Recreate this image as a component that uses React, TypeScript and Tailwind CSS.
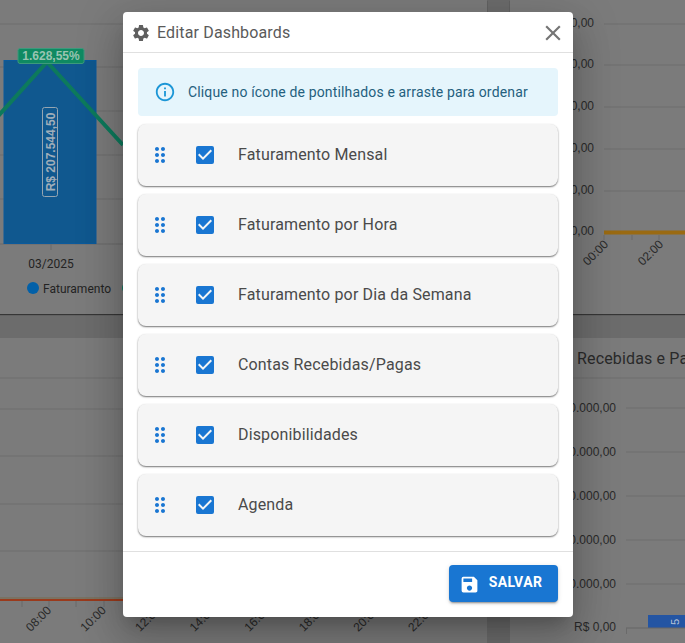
import { MdCheckBox, MdClose, MdDragIndicator, MdInfoOutline, MdSave, MdSettings } from 'react-icons/md';

const dashboards = ['Faturamento Mensal', 'Faturamento por Hora', 'Faturamento por Dia da Semana', 'Contas Recebidas/Pagas', 'Disponibilidades', 'Agenda'];

function MonthlyChart() {
    return (
        <svg width="487" height="314" className="block" fontFamily="Roboto, sans-serif">
            {[24, 67, 111, 155, 199].map((y) => (
                <line key={y} x1="0" x2="487" y1={y} y2={y} stroke="#6f6f6f" />
            ))}
            <line x1="0" x2="487" y1="244" y2="244" stroke="#6a6a6a" />
            <line x1="51" x2="51" y1="244" y2="250" stroke="#6a6a6a" />
            <rect x="4" y="60.5" width="92" height="183" fill="#10588f" stroke="#0b5a9c" />
            <polyline points="-10,125 47,62 123,145" fill="none" stroke="#0d7a5c" strokeWidth="4" />
            <rect x="18" y="48.5" width="66" height="15" rx="2" fill="#0f8a62" stroke="#3d9a7c" />
            <text x="51" y="60" textAnchor="middle" fontFamily="Arial, 'Liberation Sans', sans-serif" fontWeight="700" fontSize="12" fill="#98c4b1">
                1.628,55%
            </text>
            <rect x="42.5" y="107.5" width="15" height="89" rx="2" fill="#10588f" stroke="#95a5b1" />
            <text
                transform="translate(54.5 152) rotate(-90)"
                textAnchor="middle"
                fontFamily="Arial, 'Liberation Sans', sans-serif"
                fontWeight="700"
                fontSize="12"
                fill="#a0aeb9"
            >
                R$ 207.544,50
            </text>
            <text x="51" y="268" textAnchor="middle" fontSize="12" fill="#232323">
                03/2025
            </text>
            <circle cx="33" cy="288" r="6" fill="#0260a8" />
            <text x="43" y="293" fontSize="12" fill="#232323">
                Faturamento
            </text>
            <circle cx="128" cy="288" r="6" fill="#0d7a5c" />
        </svg>
    );
}

function HourlyChart() {
    return (
        <svg width="175" height="314" className="block" fontFamily="Arial, 'Liberation Sans', sans-serif" fontSize="12" fill="#2a2a2a">
            {[24, 65, 107, 149, 191].map((y) => (
                <g key={y}>
                    <line x1="94" x2="175" y1={y} y2={y} stroke="#6f6f6f" />
                    <text x="84" y={y + 3} textAnchor="end">
                        0,00
                    </text>
                </g>
            ))}
            <text x="84" y="235" textAnchor="end">
                0,00
            </text>
            <line x1="94" x2="175" y1="232.5" y2="232.5" stroke="#9a6a12" strokeWidth="4" />
            <line x1="94" x2="94" y1="235" y2="240" stroke="#6a6a6a" />
            <line x1="122" x2="122" y1="235" y2="240" stroke="#6a6a6a" />
            <line x1="149" x2="149" y1="235" y2="240" stroke="#6a6a6a" />
            <text transform="translate(99 245) rotate(-45)" textAnchor="end">
                00:00
            </text>
            <text transform="translate(154 245) rotate(-45)" textAnchor="end">
                02:00
            </text>
        </svg>
    );
}

function AgendaChart() {
    const hours = ['08:00', '10:00', '12:00', '14:00', '16:00', '18:00', '20:00', '22:00'];
    return (
        <svg width="487" height="305" className="block" fontFamily="Arial, 'Liberation Sans', sans-serif" fontSize="12" fill="#2a2a2a">
            {[40, 71, 118, 166, 213].map((y) => (
                <line key={y} x1="0" x2="487" y1={y} y2={y} stroke="#6f6f6f" />
            ))}
            <line x1="0" x2="487" y1="260" y2="260" stroke="#7a6a4a" />
            <line x1="0" x2="487" y1="262" y2="262" stroke="#9a3a1c" strokeWidth="2" />
            {[22, 49, 76, 104].map((x) => (
                <line key={x} x1={x} x2={x} y1="263" y2="269" stroke="#6a6a6a" />
            ))}
            {hours.map((h, i) => (
                <text key={h} transform={`translate(${52 + i * 54.6} 273) rotate(-45)`} textAnchor="end">
                    {h}
                </text>
            ))}
        </svg>
    );
}

function AccountsChart() {
    return (
        <svg width="175" height="305" className="block" fontFamily="Arial, 'Liberation Sans', sans-serif" fontSize="12" fill="#2a2a2a">
            <text x="67" y="26" fontFamily="Roboto, sans-serif" fontSize="16" letterSpacing="0.15">
                Recebidas e Pa
            </text>
            <line x1="0" x2="175" y1="40" y2="40" stroke="#6f6f6f" />
            {[70, 114, 158, 202, 246].map((y) => (
                <g key={y}>
                    <line x1="116" x2="175" y1={y} y2={y} stroke="#6f6f6f" />
                    <text x="106" y={y + 4} textAnchor="end">
                        0.000,00
                    </text>
                </g>
            ))}
            <rect x="138" y="277" width="37" height="13" fill="#2455a3" />
            <text transform="translate(169 284) rotate(-90)" textAnchor="middle" fontSize="11" fill="#b7c3d6">
                5
            </text>
            <line x1="116" x2="175" y1="290" y2="290" stroke="#666666" />
            <line x1="116.5" x2="116.5" y1="290" y2="296" stroke="#6a6a6a" />
            <text x="106" y="293" textAnchor="end">
                R$ 0,00
            </text>
        </svg>
    );
}

function DashboardRow({ label }: { label: string }) {
    return (
        <div className="flex h-[62px] items-center rounded-lg bg-[#f5f5f5] pl-[10px] shadow-[0_1px_2px_0_rgba(0,0,0,0.45),0_1px_1px_0_rgba(0,0,0,0.14)]">
            <MdDragIndicator size={24} className="text-[#1976d2]" />
            <MdCheckBox size={24} className="ml-[21px] text-[#1976d2]" />
            <span className="ml-[21px] text-base tracking-[0.15px] text-[#4a4a4a]">{label}</span>
        </div>
    );
}

export default function App() {
    return (
        <div className="relative h-[643px] w-[685px] overflow-hidden bg-[#6c6c6c] font-['Roboto',sans-serif]">
            <div className="grid grid-cols-[487px_175px] grid-rows-[314px_305px] gap-x-[23px] gap-y-6">
                <div className="bg-[#7b7b7b] shadow-[0_1px_1px_rgba(0,0,0,0.5)]">
                    <MonthlyChart />
                </div>
                <div className="bg-[#7b7b7b] shadow-[0_1px_1px_rgba(0,0,0,0.5)]">
                    <HourlyChart />
                </div>
                <div className="bg-[#7b7b7b]">
                    <AgendaChart />
                </div>
                <div className="bg-[#7b7b7b]">
                    <AccountsChart />
                </div>
            </div>
            <div className="absolute inset-0 pl-[123px] pt-3">
                <div className="flex h-[605px] w-[450px] flex-col rounded bg-white shadow-[0_11px_15px_-7px_rgba(0,0,0,0.2),0_24px_38px_3px_rgba(0,0,0,0.14),0_9px_46px_8px_rgba(0,0,0,0.12)]">
                    <div className="flex h-[41px] items-center border-b border-[#e0e0e0] pl-2 pr-[7px] pt-[2px]">
                        <MdSettings size={20} className="text-[#5f5f5f]" />
                        <span className="ml-[6px] text-base tracking-[0.15px] text-[#5a5a5a]">Editar Dashboards</span>
                        <MdClose size={26} className="ml-auto text-[#757575]" />
                    </div>
                    <div className="flex flex-1 flex-col gap-2 px-[15px] pt-[15px]">
                        <div className="flex h-12 items-center rounded bg-[#e5f5fc] pl-4">
                            <MdInfoOutline size={22} className="text-[#1c96d6]" />
                            <span className="ml-3 text-sm tracking-[0.15px] text-[#24607e]">Clique no ícone de pontilhados e arraste para ordenar</span>
                        </div>
                        {dashboards.map((d) => (
                            <DashboardRow key={d} label={d} />
                        ))}
                    </div>
                    <div className="flex h-[66px] items-start justify-end border-t border-[#e0e0e0] pr-[15px] pt-[13px]">
                        <button className="flex h-[37px] w-[109px] items-center justify-center gap-[9px] rounded bg-[#1976d2] pb-[3px] pr-[6px] text-sm font-bold tracking-[0.4px] text-white shadow-[0_3px_1px_-2px_rgba(0,0,0,0.2),0_2px_2px_0_rgba(0,0,0,0.14),0_1px_5px_0_rgba(0,0,0,0.12)]">
                            <MdSave size={21} className="translate-y-[2px]" />
                            SALVAR
                        </button>
                    </div>
                </div>
            </div>
        </div>
    );
}
